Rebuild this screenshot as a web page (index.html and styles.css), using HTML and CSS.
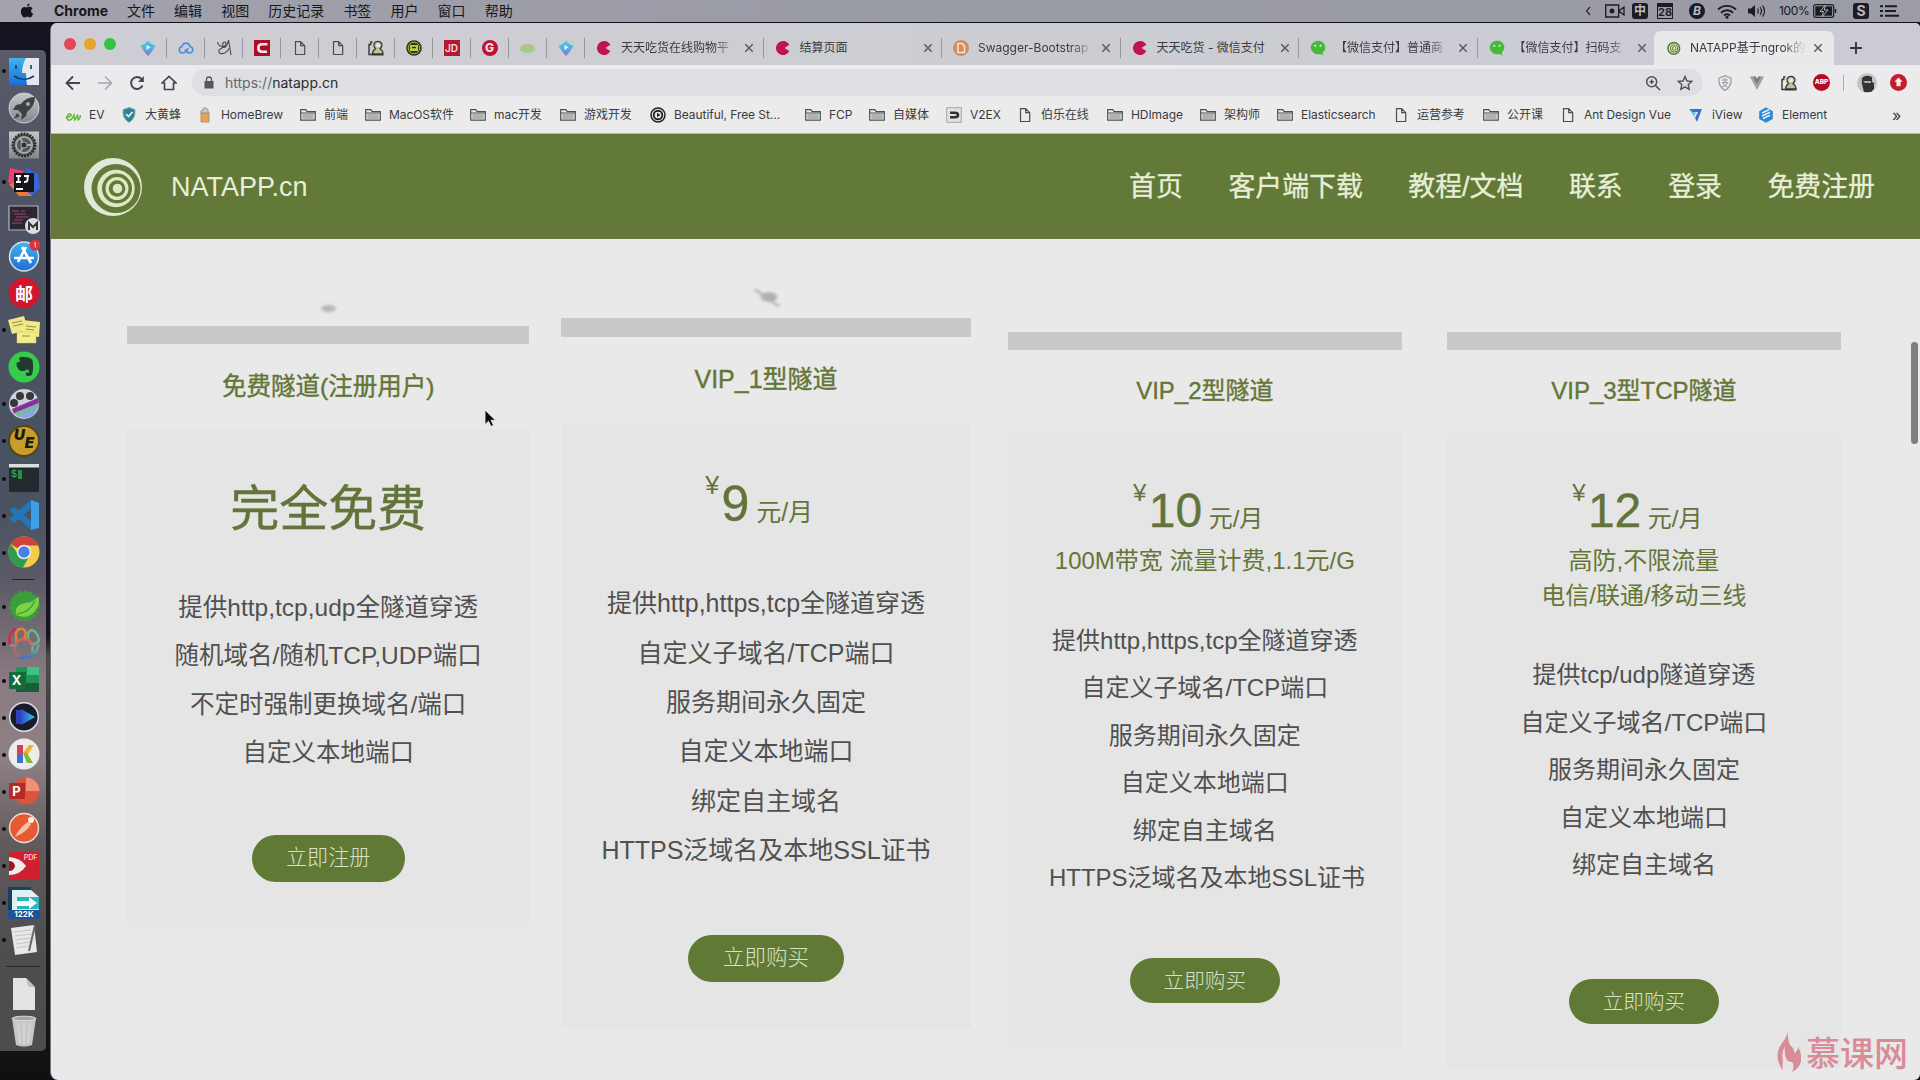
FILE: index.html
```
<!DOCTYPE html>
<html lang="zh-CN">
<head>
<meta charset="utf-8">
<title>NATAPP</title>
<link rel="stylesheet" href="styles.css">
</head>
<body>
<svg class="defs" width="0" height="0">
  <defs>
    <linearGradient id="gem" x1="0" y1="0" x2="0" y2="1"><stop offset="0" stop-color="#55c8e6"/><stop offset=".5" stop-color="#4fb2de"/><stop offset="1" stop-color="#8a6fd0"/></linearGradient>
    <linearGradient id="silver" x1="0" y1="0" x2="0" y2="1"><stop offset="0" stop-color="#c4c6c8"/><stop offset="1" stop-color="#84878a"/></linearGradient>
    <linearGradient id="blue" x1="0" y1="0" x2="0" y2="1"><stop offset="0" stop-color="#3fb4ee"/><stop offset="1" stop-color="#1b6fd8"/></linearGradient>
    <linearGradient id="paw" x1="0" y1="0" x2="0" y2="32" gradientUnits="userSpaceOnUse"><stop offset="0" stop-color="#e08a30"/><stop offset=".45" stop-color="#d8605a"/><stop offset=".7" stop-color="#4fb9a8"/><stop offset="1" stop-color="#4560d8"/></linearGradient>
    <linearGradient id="play" x1="0" y1="0" x2="1" y2="0"><stop offset="0" stop-color="#3048d0"/><stop offset="1" stop-color="#30d0d8"/></linearGradient>
  </defs>
  <symbol id="folder" viewBox="0 0 16 16"><path d="M.7 13.2V2.6h5l1.6 2h8v8.6z" fill="#ececec" stroke="#4c4d50" stroke-width="1.2"/><path d="M2.3 7h11.4v5.2H2.3z" fill="#b0b1b3"/><path d="M1 6h14" stroke="#4c4d50"/></symbol>
  <symbol id="page" viewBox="0 0 16 16"><path d="M3.5 1.7h5.2l4 4v8.8H3.5z M8.7 1.7v4h4" fill="none" stroke="#4c4d50" stroke-width="1.2"/></symbol>
  <symbol id="close" viewBox="0 0 10 10"><path d="M1.3 1.3l7.4 7.4M8.7 1.3L1.3 8.7" stroke="#55565a" stroke-width="1.4"/></symbol>
  <symbol id="pac" viewBox="0 0 16 16"><path d="M8 1a7 7 0 1 0 6.3 10L9.5 8l4.800-3.200A7 7 0 0 0 8 1z" fill="#c01350"/></symbol>
  <symbol id="gemicon" viewBox="0 0 16 16"><path d="M8 .5l2.800 3 4.700 2.600-4 6L8 16l-3.500-3.900-4-6L5.200 3.500z" fill="url(#gem)"/><path d="M6.500 5l4 2.300-4 2.700z" fill="#e8f8ff"/></symbol>
  <symbol id="wechat" viewBox="0 0 16 16"><path d="M8 .8a7.200 6.700 0 0 1 4.500 12l1 2.600-3.300-1.500A7.300 6.700 0 1 1 8 .8z" fill="#47b93a"/><circle cx="5.300" cy="5.800" r="1" fill="#e6f8e2"/><circle cx="10.500" cy="5.800" r="1" fill="#e6f8e2"/></symbol>
  <symbol id="person" viewBox="0 0 16 16"><path d="M4.500 2H2.800v2.500H1v10h3" fill="none" stroke="#34382e" stroke-width="1.400"/><path d="M4.500 14q0-3.500 3-5.300Q5.500 7 6 4q1-2.700 4-2.700t4 3q.3 2.500-2 4.400 3 1.500 3 5.300z" fill="#b9c49a" stroke="#34382e" stroke-width="1.200"/><circle cx="10" cy="5.200" r="2" fill="#e9ecde"/><path d="M4 14.500h11.500" stroke="#34382e" stroke-width="1.800"/></symbol>
  <symbol id="rings" viewBox="0 0 60 60"><circle cx="30" cy="30" r="29" fill="#dfe9da"/><circle cx="33" cy="31.500" r="24.500" fill="#627937"/><circle cx="33" cy="31.500" r="18.700" fill="#dfe9c8"/><circle cx="34" cy="31.500" r="15" fill="#627937"/><circle cx="34" cy="31.500" r="11.500" fill="#dfe9c8"/><circle cx="34" cy="31.500" r="8.300" fill="#627937"/><circle cx="34.500" cy="31.500" r="4.800" fill="#dfe9c8"/></symbol>
</svg>

<div class="menubar">
  <svg class="apple" viewBox="0 0 16 18"><path d="M11 .3c.1 1.700-1.400 3.300-3 3.300C7.800 2 9.300.5 11 .3zM8.200 4.800c.8 0 1.500-.6 2.800-.6 1.400 0 2.700.8 3.400 1.900-2.600 1.500-2.200 5 .6 6-.6 1.700-2.100 4.300-3.800 4.300-1.100 0-1.500-.7-2.900-.7s-1.900.7-2.900.7C3.200 16.400 1 12.700 1 9.500c0-3.300 2-5.200 4.100-5.200 1.300 0 2.200.5 3.100.5z" fill="#15151a"/></svg>
  <b class="appname">Chrome</b>
  <nav class="menus"><span>文件</span><span>编辑</span><span>视图</span><span>历史记录</span><span>书签</span><span>用户</span><span>窗口</span><span>帮助</span></nav>
  <div class="status">
    <svg width="6" height="10" viewBox="0 0 6 10"><path d="M5 1L1.500 5 5 9" fill="none" stroke="#2a2b30" stroke-width="1.200"/></svg>
    <svg width="20" height="14" viewBox="0 0 20 14"><path d="M.7 1h13v12H.7zM13.700 7l5.300-4v8z" fill="none" stroke="#1c1d22" stroke-width="1.300"/><circle cx="7" cy="7" r="2.500" fill="#1c1d22"/></svg>
    <span class="badge-ime">中</span>
    <span class="badge-cal">28</span>
    <span class="badge-b">B</span>
    <svg width="20" height="15" viewBox="0 0 20 15"><g fill="none" stroke="#1c1d22" stroke-width="1.900"><path d="M1 5.500a13 13 0 0 1 18 0M4 8.700a8.600 8.600 0 0 1 12 0M7 11.500a4.200 4.200 0 0 1 6 0"/></g><circle cx="10" cy="13.300" r="1.500" fill="#1c1d22"/></svg>
    <svg width="18" height="14" viewBox="0 0 18 14"><path d="M1 4.500h3L8 1v12L4 9.500H1z" fill="#1c1d22"/><path d="M10.500 4.500q1.500 2.500 0 5M13 3q3 4 0 8M15.500 1.500q4 5.500 0 11" fill="none" stroke="#1c1d22" stroke-width="1.200"/></svg>
    <span class="percent">100%</span>
    <svg width="24" height="14" viewBox="0 0 24 14"><rect x=".7" y=".7" width="20" height="12.600" rx="2" fill="none" stroke="#1c1d22" stroke-width="1.200"/><rect x="2.300" y="2.300" width="16.800" height="9.400" fill="#1c1d22"/><path d="M12.500 1L7 7.500h3.500L9 13l6-7h-3.800z" fill="#1c1d22" stroke="#b0b0b8"/><path d="M22.500 5v4" stroke="#1c1d22" stroke-width="1.500"/></svg>
    <span class="badge-s">S</span>
    <svg width="19" height="12" viewBox="0 0 19 12"><path d="M0 1.200h3M5 1.200h12M0 6h3M5 6h11M0 10.800h3M5 10.800h14" stroke="#1c1d22" stroke-width="1.900"/></svg>
  </div>
</div>

<div class="desktop">
  <aside class="dock-side">
    <div class="dock">
      <div class="app run"><svg viewBox="0 0 32 32"><path d="M1 3h30v27H1z" fill="#e2e8ee"/><path d="M1 3h17q-4 7-4 15h4q0 6 1 12H1z" fill="url(#blue)"/><path d="M8 10v4M23 10v4M6 21q10 7 20 0" fill="none" stroke="#1d3b5c" stroke-width="1.600"/></svg></div>
      <div class="app"><svg viewBox="0 0 32 32"><circle cx="16" cy="16" r="15" fill="url(#silver)" stroke="#ced0d2"/><path d="M27 5q-9 0-14 7l-5 1-3 5 5 0 4 4-1 6 5-4 1-4q8-6 8-15zM9 21l-3 6 6-3z" fill="#3d4144"/><circle cx="20" cy="12" r="2" fill="#aaa"/></svg></div>
      <div class="app"><svg viewBox="0 0 32 32"><path d="M1 2.500h30v27H1z" fill="url(#silver)"/><circle cx="16" cy="16" r="11" fill="#55585a" stroke="#2b2d2f" stroke-width="3" stroke-dasharray="2 1"/><circle cx="16" cy="16" r="8" fill="none" stroke="#a5a8aa" stroke-width="2"/><path d="M16 16h8M16 16l-4-7M16 16l-4 7" stroke="#a5a8aa" stroke-width="2"/><circle cx="16" cy="16" r="3" fill="#2b2d2f" stroke="#a5a8aa"/></svg></div>
      <div class="app run"><svg viewBox="0 0 32 32"><path d="M2 2l14 3-6 16-10-5z" fill="#e8407a"/><path d="M18 2l12 6 2 14-9 8-9-8z" fill="#3566dc"/><path d="M1 18l10 12h13L9 16z" fill="#ea7a3a"/><path d="M6 7h20v19H6z" fill="#15151a"/><path d="M8 10h5M10.500 10v6M8 16h5M16 10h5M19.500 10v4q0 2-3.500 2M8 23h7" fill="none" stroke="#fff" stroke-width="1.800"/></svg></div>
      <div class="app"><svg viewBox="0 0 32 32"><path d="M1 3h29v24H1z" fill="#2c2632" stroke="#b5b6bc" stroke-width="1.200"/><path d="M4 8h7M6 11h12M8 14h13M6 17h9M4 20h10M13 8h4" stroke="#9a4960" stroke-width="1.100"/><circle cx="25" cy="23" r="8" fill="#dcdde0"/><path d="M21 27v-7l4 4 4-4v7" fill="none" stroke="#333" stroke-width="2"/></svg></div>
      <div class="app"><svg viewBox="0 0 32 32"><circle cx="16" cy="16.500" r="14.500" fill="url(#blue)" stroke="#d7dde6" stroke-width="1.500"/><path d="M18 7L10 22M14 7l9 16M6 18h20" stroke="#fff" stroke-width="2.600"/><circle cx="27" cy="5" r="5.500" fill="#d9343c"/><path d="M26 3.500l1.300-1v5" fill="none" stroke="#ffd0d0"/></svg></div>
      <div class="app"><svg viewBox="0 0 32 32"><circle cx="16" cy="16" r="15.500" fill="#cf1730"/></svg><span class="glyph mail">邮</span></div>
      <div class="app run"><svg viewBox="0 0 32 32"><path d="M0 6l16-4 4 14-16 4z" fill="#efe88a"/><path d="M14 6l18 2-1 15-17-2z" fill="#f2ea86"/><path d="M9 18h19v11H9z" fill="#f4ec8a" stroke="#d0c668" stroke-width=".5"/><path d="M4 9l10-2M5 12l10-2M18 12l10 1M18 15l8 1M14 22h8" stroke="#998c40"/></svg></div>
      <div class="app"><svg viewBox="0 0 32 32"><circle cx="16" cy="16" r="15.500" fill="#35cc4c"/><path d="M11 7q3-2 5-1 7 0 8.500 3.500 1.500 8-.5 14-1.500 2-4.500 1.500-3-1.500-1-3.500 2-.5 2 .8 1.200-1 0-3.300-2.500-1-3 .5-4 1.500-7-1-2.500-3-2-7 2 0 3.500-1z" fill="#243a30"/></svg></div>
      <div class="app run"><svg viewBox="0 0 32 32"><circle cx="16" cy="16" r="15" fill="#cfd2d8"/><g fill="#36393e"><circle cx="12" cy="8" r="4"/><circle cx="22" cy="8" r="4"/><circle cx="6" cy="15" r="4"/></g><path d="M4 21l26-11 1 5L6 26z" fill="#8b2ca0"/><path d="M6 25l25-10 0 4L10 29z" fill="#79b7a0"/><path d="M10 28l20-9-4 8q-8 6-16 1z" fill="#8aa8de"/></svg></div>
      <div class="app run"><svg viewBox="0 0 32 32"><circle cx="16" cy="16" r="15" fill="#c79d2c" stroke="#55431c" stroke-width="2"/></svg><span class="glyph ue"><i>U</i><i class="low">E</i></span></div>
      <div class="app run"><svg viewBox="0 0 32 32"><path d="M1 2h30v28H1z" fill="#232b30"/><path d="M1 2h30v3.500H1z" fill="#dadfe0"/><path d="M10 8h4v9h-4z" fill="#2b8d43"/></svg><span class="glyph term">$</span></div>
      <div class="app run"><svg viewBox="0 0 32 32"><path d="M23 1l8 3v25l-8 2z" fill="#3ba0e6"/><path d="M23 1v9L6 24l-5-4zM1 11l5-3 17 14v9z" fill="#2376b8"/></svg></div>
      <div class="app run"><svg viewBox="0 0 32 32"><circle cx="16" cy="16" r="15.500" fill="#f3cc48"/><path d="M16 16L2.600 8A15.500 15.500 0 0 1 30 9.500H16z" fill="#d2403a"/><path d="M2.600 8A15.500 15.500 0 0 0 15 31.500L22 19l-6-3-6 2z" fill="#319a52"/><circle cx="16" cy="16" r="7.300" fill="#e8edf4"/><circle cx="16" cy="16" r="5.700" fill="#4680e2"/></svg></div>
      <hr class="rule short">
      <div class="app run"><svg viewBox="0 0 32 32"><circle cx="16.500" cy="16" r="14" fill="#3c9e3a" stroke="#3c9e3a" stroke-width="3" stroke-dasharray="3 2"/><path d="M30 6q-4 7-13 7-11 2-9 12 12 5 19-4 6-8 3-15z" fill="#7cd348"/><path d="M9 24q12-1 18-13" fill="none" stroke="#3c9e3a" stroke-width="1.300"/></svg></div>
      <div class="app run"><svg viewBox="0 0 32 32"><g fill="none" stroke-width="2.500"><path d="M2 18Q-1 6 8 2" stroke="#c92e4e"/><path d="M8 15V6q2-5 7-4 4 2 2 8l-2 3" stroke="#e58232"/><path d="M20 12q-1-8 4-9 6 2 7 11-4 5-9 2" stroke="#62b98c"/><path d="M2 18l5 1q1-6 8-7 8 0 10 7l-1 7 4-1 3-8M10 30q7 1 14-1l-1-2" stroke="url(#paw)"/><path d="M7 19q-3 6 4 11" stroke="#b06a6a"/></g></svg></div>
      <div class="app run"><svg viewBox="0 0 32 32"><path d="M8 3h23v25H8z" fill="#219455"/><path d="M19 3h12v8H19z" fill="#39c37c"/><path d="M19 19h12v9H8v-7z" fill="#175f38"/><path d="M1 8h17v17H1z" fill="#126c3b"/></svg><span class="glyph office">X</span></div>
      <div class="app run"><svg viewBox="0 0 32 32"><circle cx="16" cy="16" r="14.300" fill="#171b2a" stroke="#d9dce3" stroke-width="1.500"/><path d="M8 9h6v14H8z" fill="#3040b8"/><path d="M13 8l14 8-14 8z" fill="url(#play)"/></svg></div>
      <div class="app run"><svg viewBox="0 0 32 32"><circle cx="16" cy="16" r="15.500" fill="#ececea"/><path d="M9 7h6v9l-6 9z" fill="#d83b58"/><path d="M15 15l6-8h5l-6 9z" fill="#efb32d"/><path d="M15 15l4 0 6 10h-6z" fill="#7bb93b"/><path d="M9 17l6-1v9H9z" fill="#3b72cf"/></svg></div>
      <div class="app run"><svg viewBox="0 0 32 32"><circle cx="18" cy="16" r="13.500" fill="#dc5340"/><path d="M18 2.500A13.500 13.500 0 0 1 31.500 16H18z" fill="#f09078"/><path d="M1 8h16v16H1z" fill="#b42a26"/></svg><span class="glyph office">P</span></div>
      <div class="app run"><svg viewBox="0 0 32 32"><circle cx="16" cy="16" r="14.500" fill="#e65a35" stroke="#f0ddd0" stroke-width="1.400"/><path d="M7 25q5-10 13-15l3 2q-4 8-16 13z" fill="#f3c3a8"/><circle cx="23" cy="8" r="3" fill="#fff0e4"/></svg></div>
      <div class="app run"><svg viewBox="0 0 32 32"><path d="M1 2h30v28H1z" fill="#cf1f30"/><path d="M1 7q12 1 17 9-6 9-17 9z" fill="#eee"/><path d="M1 11q5 0 6 5-1 5-6 5z" fill="#a41424"/></svg><span class="glyph pdf">PDF</span></div>
      <div class="app run"><svg viewBox="0 0 32 32"><path d="M0 0h23v32H0z" fill="#17415c"/><path d="M4 3h19l8 7v14H4z" fill="#dff2f2"/><path d="M9 10h22v12H9z" fill="#28b8bc"/><path d="M9 14h12v-4l8 6-8 6v-3H9z" fill="#f2fbfb"/><path d="M0 23h32v9H0z" fill="#1c5496"/></svg><span class="glyph net">122K</span></div>
      <div class="app run"><svg viewBox="0 0 32 32"><path d="M3 4l23-3 3 27-22 3z" fill="#e8e8e8"/><path d="M6 8l17-2M7 12l17-2M7 16l16-2M8 20l14-2M8 24l12-2" stroke="#c4c4c4"/><path d="M27 1l-6 26" stroke="#66686c" stroke-width="2"/></svg></div>
      <hr class="rule">
      <div class="app"><svg viewBox="0 0 32 32"><path d="M5 0h13l9 9v23H5z" fill="#e3e3e1"/><path d="M18 0l2 8 7 2z" fill="#bfc0bf"/></svg></div>
      <div class="app"><svg viewBox="0 0 32 32"><path d="M4 3h24l-4 27q-8 3-16 0z" fill="#c6c7c7"/><ellipse cx="16" cy="3.500" rx="12" ry="2.300" fill="#a4a6a7" stroke="#ddd"/><path d="M10 8l2 20M16 8v21M22 8l-2 20" stroke="#d3d4d4" stroke-width="2"/></svg></div>
    </div>
  </aside>

  <main class="window">
    <div class="tabstrip">
      <div class="lights"><i class="red"></i><i class="yellow"></i><i class="green"></i></div>
      <div class="pins">
        <span><svg><use href="#gemicon"/></svg></span>
        <span><svg viewBox="0 0 16 16"><path d="M4 13a3.300 3.300 0 0 1 0-6.500C5 2 11 2 12 6.500a3.300 3.300 0 0 1 0 6.500Q9 13 7 9.500M4 13q4 0 6-5" fill="none" stroke="#4a8fdc" stroke-width="1.600"/></svg></span>
        <span><svg viewBox="0 0 16 16"><path d="M1.500 2q1 5 6 4.500M13 8.500q-3 6-9 5-3-3 1-5 5-2 5-5.500-1-2-3 0-1 3 1 4.500 3 0 4.500-7.500l2.500 15" fill="none" stroke="#44464a" stroke-width="1.100"/></svg></span>
        <span><svg viewBox="0 0 16 16"><path d="M0 0h16v16H0z" fill="#a80e24"/><path d="M13.500 4.300H8Q4.300 4.300 4.300 8T8 11.700h5" fill="none" stroke="#f4e6e6" stroke-width="2.600"/></svg></span>
        <span><svg><use href="#page"/></svg></span>
        <span><svg><use href="#page"/></svg></span>
        <span><svg><use href="#person"/></svg></span>
        <span><svg viewBox="0 0 16 16"><circle cx="8" cy="8" r="7.800" fill="#33361c"/><circle cx="8" cy="8" r="5.800" fill="none" stroke="#aebb3a"/><path d="M4 5h8v6H4z" fill="#c0cc48"/><path d="M6 7.500h4" stroke="#33361c" stroke-width="1.500"/></svg></span>
        <span class="jd"><b>JD</b></span>
        <span class="gg"><b>G</b></span>
        <span><i class="leaf"></i></span>
        <span><svg><use href="#gemicon"/></svg></span>
      </div>
      <div class="tab"><svg class="fav"><use href="#pac"/></svg><span class="label fade">天天吃货在线购物平</span><svg class="x"><use href="#close"/></svg></div>
      <div class="tab"><svg class="fav"><use href="#pac"/></svg><span class="label">结算页面</span><svg class="x"><use href="#close"/></svg></div>
      <div class="tab"><svg class="fav" viewBox="0 0 16 16"><circle cx="8" cy="8" r="8" fill="#d48d58"/><path d="M5 3.500h4l2.500 2.500v6.500H5z" fill="#d48d58" stroke="#f3e6da" stroke-width="1.500"/></svg><span class="label fade">Swagger-Bootstrap</span><svg class="x"><use href="#close"/></svg></div>
      <div class="tab"><svg class="fav"><use href="#pac"/></svg><span class="label">天天吃货 - 微信支付</span><svg class="x"><use href="#close"/></svg></div>
      <div class="tab"><svg class="fav"><use href="#wechat"/></svg><span class="label fade">【微信支付】普通商</span><svg class="x"><use href="#close"/></svg></div>
      <div class="tab last"><svg class="fav"><use href="#wechat"/></svg><span class="label fade">【微信支付】扫码支</span><svg class="x"><use href="#close"/></svg></div>
      <div class="tab active"><svg class="fav"><use href="#rings"/></svg><span class="label fade">NATAPP基于ngrok的</span><svg class="x"><use href="#close"/></svg></div>
      <svg class="plus" viewBox="0 0 12 12"><path d="M6 0v12M0 6h12" stroke="#36373b" stroke-width="1.900"/></svg>
    </div>

    <div class="toolbar">
      <div class="navs">
        <svg viewBox="0 0 16 16"><path d="M15 8H2M8 1.500L1.500 8 8 14.500" fill="none" stroke="#46474b" stroke-width="1.800"/></svg>
        <svg viewBox="0 0 16 16"><path d="M1 8h13M8 1.500L14.500 8 8 14.500" fill="none" stroke="#a5a6aa" stroke-width="1.600"/></svg>
        <svg viewBox="0 0 16 16"><path d="M13.500 10.500A6 6 0 1 1 12.500 4" fill="none" stroke="#46474b" stroke-width="1.900"/><path d="M14.800 1v6H9z" fill="#46474b"/></svg>
        <svg viewBox="0 0 16 16"><path d="M1 8l7-6.500L15 8h-2.500v6.500h-9V8z" fill="none" stroke="#46474b" stroke-width="1.700"/></svg>
      </div>
      <div class="omnibox">
        <svg class="lock" viewBox="0 0 10 13"><path d="M.5 5h9v7.500h-9z" fill="#55565b"/><path d="M2.500 5V3.500a2.500 2.500 0 0 1 5 0V5" fill="none" stroke="#55565b" stroke-width="1.300"/></svg>
        <span class="url"><span class="scheme">https://</span>natapp.cn</span>
        <svg viewBox="0 0 16 16"><circle cx="6.700" cy="6.700" r="5" fill="none" stroke="#505156" stroke-width="1.500"/><path d="M10.500 10.500L15 15M4.500 6.700h4.400M6.700 4.500v4.400" stroke="#505156" stroke-width="1.500"/></svg>
        <svg viewBox="0 0 16 16"><path d="M8 1.500l2 4.500 4.800.4-3.600 3.200 1 4.800L8 11.900l-4.200 2.500 1-4.800L1.200 6.400 6 6z" fill="none" stroke="#505156" stroke-width="1.400"/></svg>
      </div>
      <div class="exts">
        <svg viewBox="0 0 16 16"><path d="M8 .7l6 2.500q1 8-6 12.300Q1 11.200 2 3.200z" fill="none" stroke="#999a9e" stroke-width="1.200"/><path d="M5 5h6M8 3v4M5 7.500h6q-2 3.500-6 4.500M5.500 8q2 3 5 4" fill="none" stroke="#999a9e"/></svg>
        <svg viewBox="0 0 16 16"><path d="M.8 1.500H5L8 7l3-5.500h4.200L8 15z" fill="#a0a2a3"/><path d="M4 1.500h2.800L8 4l1.200-2.500H12L8 9z" fill="#77797b"/></svg>
        <svg><use href="#person"/></svg>
        <span class="abp">ABP</span>
        <i class="bar"></i>
        <svg class="avatar" viewBox="0 0 20 20"><circle cx="10" cy="10" r="10" fill="#c3c4c2"/><path d="M5 5q4-4 10-1l0 5 2 1v6l-3 3H7l-1-4q-2-5-1-10z" fill="#333436"/><path d="M6 8h8v2H8z" fill="#aeb0ae"/></svg>
        <svg class="update" viewBox="0 0 18 18"><circle cx="9" cy="9" r="9" fill="#c51c2b"/><path d="M9 3.800l4.500 4.500h-2.300V13H6.800V8.300H4.500z" fill="#f6eaea"/></svg>
      </div>
    </div>

    <div class="bookmarks">
      <span><svg viewBox="0 0 16 16"><path d="M.8 10.500q6-.5 5.200-3.200-2.500-1.300-4 2.200-.3 4.300 3 3.500 2.500-1 4-5l.8 5q2-2 2.700-5.300l.8 5.300q2-2 2.200-5" fill="none" stroke="#62b234" stroke-width="1.400"/></svg>EV</span>
      <span><svg viewBox="0 0 16 16"><path d="M8 .5L14 2.500q1 9-6 13Q1 11.500 2 2.500z" fill="#2d8496" stroke="#8fb1b6"/><path d="M5 7l2.500 2.500L11.500 5" fill="none" stroke="#e8f8f8" stroke-width="1.600"/></svg>大黄蜂</span>
      <span><svg viewBox="0 0 16 16"><path d="M4 5.500h8v9.500H4z" fill="#e3a552" stroke="#a9947e"/><path d="M4 6q-1-3 2-3 0-3 2-2 4 0 3 5z" fill="#c9c9c5" stroke="#85837f" stroke-width=".7"/></svg>HomeBrew</span>
      <span><svg><use href="#folder"/></svg>前端</span>
      <span><svg><use href="#folder"/></svg>MacOS软件</span>
      <span><svg><use href="#folder"/></svg>mac开发</span>
      <span><svg><use href="#folder"/></svg>游戏开发</span>
      <span><svg viewBox="0 0 16 16"><circle cx="8" cy="8" r="7" fill="none" stroke="#222326" stroke-width="1.500"/><circle cx="8" cy="8" r="4.300" fill="none" stroke="#222326" stroke-width="1.900"/><path d="M7 5.800L10.500 8 7 10.200z" fill="#222326"/></svg>Beautiful, Free St...</span>
      <span><svg><use href="#folder"/></svg>FCP</span>
      <span><svg><use href="#folder"/></svg>自媒体</span>
      <span><svg viewBox="0 0 16 16"><path d="M.7.700h14.600v14.600H.7z" fill="#e2e2e3" stroke="#a5a6a8"/><path d="M4 5.700h5q3 0 3 2.300t-3 2.300H4" fill="none" stroke="#303236" stroke-width="2.600"/></svg>V2EX</span>
      <span><svg><use href="#page"/></svg>伯乐在线</span>
      <span><svg><use href="#folder"/></svg>HDImage</span>
      <span><svg><use href="#folder"/></svg>架构师</span>
      <span><svg><use href="#folder"/></svg>Elasticsearch</span>
      <span><svg><use href="#page"/></svg>运营参考</span>
      <span><svg><use href="#folder"/></svg>公开课</span>
      <span><svg><use href="#page"/></svg>Ant Design Vue</span>
      <span><svg viewBox="0 0 16 16"><path d="M1 2h13L9 15 7 11l3-6H4z" fill="#3d6fd8"/><path d="M1 2l3 3h4l-2 5z" fill="#6fc8e0"/></svg>iView</span>
      <span><svg viewBox="0 0 16 16"><path d="M8 .3l6.800 3.900v7.700L8 15.700l-6.800-3.800V4.200z" fill="#2f88d4"/><path d="M4 6l7-3.200M4 9l8-3.800M5 11.500l7-3.300" stroke="#e1f0fb" stroke-width="1.500"/></svg>Element</span>
      <span class="more">»</span>
    </div>

    <header class="site">
      <svg class="logo"><use href="#rings"/></svg>
      <span class="brand">NATAPP.cn</span>
      <nav><a>首页</a><a>客户端下载</a><a>教程/文档</a><a>联系</a><a>登录</a><a>免费注册</a></nav>
    </header>

    <section class="plans">
      <article class="card c1">
        <i class="speck"></i>
        <div class="strip"></div>
        <h3>免费隧道(注册用户)</h3>
        <div class="body">
          <p class="price free">完全免费</p>
          <ul><li>提供http,tcp,udp全隧道穿透</li><li>随机域名/随机TCP,UDP端口</li><li>不定时强制更换域名/端口</li><li>自定义本地端口</li></ul>
          <a class="btn">立即注册</a>
        </div>
      </article>
      <article class="card c2">
        <i class="speck"></i>
        <div class="strip"></div>
        <h3>VIP_1型隧道</h3>
        <div class="body">
          <p class="price"><span class="yen">¥</span><span class="num">9</span><span class="unit">元/月</span></p>
          <ul><li>提供http,https,tcp全隧道穿透</li><li>自定义子域名/TCP端口</li><li>服务期间永久固定</li><li>自定义本地端口</li><li>绑定自主域名</li><li>HTTPS泛域名及本地SSL证书</li></ul>
          <a class="btn">立即购买</a>
        </div>
      </article>
      <article class="card c3">
        <div class="strip"></div>
        <h3>VIP_2型隧道</h3>
        <div class="body">
          <p class="price"><span class="yen">¥</span><span class="num">10</span><span class="unit">元/月</span></p>
          <p class="sub">100M带宽 流量计费,1.1元/G</p>
          <ul><li>提供http,https,tcp全隧道穿透</li><li>自定义子域名/TCP端口</li><li>服务期间永久固定</li><li>自定义本地端口</li><li>绑定自主域名</li><li class="wide">HTTPS泛域名及本地SSL证书</li></ul>
          <a class="btn">立即购买</a>
        </div>
      </article>
      <article class="card c4">
        <div class="strip"></div>
        <h3>VIP_3型TCP隧道</h3>
        <div class="body">
          <p class="price"><span class="yen">¥</span><span class="num">12</span><span class="unit">元/月</span></p>
          <p class="sub">高防,不限流量</p>
          <p class="sub">电信/联通/移动三线</p>
          <ul><li>提供tcp/udp隧道穿透</li><li>自定义子域名/TCP端口</li><li>服务期间永久固定</li><li>自定义本地端口</li><li>绑定自主域名</li></ul>
          <a class="btn">立即购买</a>
        </div>
      </article>
    </section>
  </main>
</div>

<i class="scrollthumb"></i>
<svg class="cursor" viewBox="0 0 13 19"><path d="M1 1v14.500l3.500-3.300 2.500 5.300 2.500-1.200-2.400-5h4.500z" fill="#0c0c0c" stroke="#e8e8e8" stroke-width=".9"/></svg>
<div class="watermark">
  <svg viewBox="0 0 24 42"><path d="M11 0q-1 6-6 12-6 8-4 17 2 7 5 11-1-6 0-10-2-8 2-15-1 8 1 12 1 4 6 4 3 3 0 10 8-4 9-11 1-8-3-14 0 4-4 6 1-4-4-8-3-7-2-14z" fill="#d98b98"/></svg>
  <span>慕课网</span>
</div>
</body>
</html>
```
FILE: styles.css
```
* { box-sizing: border-box; }
body {
  margin: 0;
  width: 1920px;
  height: 1080px;
  overflow: hidden;
  background: #101018;
  font-family: Inter, "Noto Sans CJK SC", sans-serif;
  position: relative;
}
.defs { position: absolute; }
i { font-style: normal; }
svg { flex: none; display: block; }

/* system menu bar */
.menubar {
  display: flex;
  align-items: center;
  height: 22px;
  padding-left: 20px;
  background: linear-gradient(90deg, #a3a2ad, #989aa4 50%, #9b9ca5);
  color: #15161a;
  font-size: 14px;
  line-height: 22px;
}
.apple { width: 14px; height: 16px; }
.appname { width: 73px; margin-left: 20px; font-size: 14px; }
.menus { display: flex; gap: 19.100px; flex: 1; }
.status {
  display: grid;
  grid-template-columns: 20px 27px 25px 32px 28px 30px 32px 34px 40px 27px 22px;
  width: 335px;
  align-items: center;
}
.badge-ime, .badge-s, .badge-cal, .badge-b {
  width: 16px; height: 16px; line-height: 16px;
  background: #1c1d22; color: #b8b9c1; border-radius: 3px;
  text-align: center; font-weight: 700; font-size: 12px;
}
.badge-cal { border-radius: 0; background: none; border: 1px solid #1c1d22; border-top-width: 4px; line-height: 11px; color: #1c1d22; font-size: 11px; }
.badge-b { border-radius: 50%; font-style: italic; }
.badge-s { font-size: 14px; }
.percent { font-size: 12px; letter-spacing: -.3px; }

.desktop { display: flex; height: 1058px; padding-top: 1px; }

/* dock */
.dock-side {
  width: 50px;
  padding: 27px 4px 0 0;
  background: linear-gradient(#141420 0 58%, #4e4b4f 60%, #252527 75%, #101012);
}
.dock {
  display: flex;
  flex-direction: column;
  height: 1001px;
  padding-top: 2px;
  border-radius: 0 5px 5px 0;
  background: linear-gradient(#5a5a68, #505464 12%, #485261 45%, #5b5a66 53%, #8b7b83 63%, #8d8084 71%, #625b5d 79%, #4e4d4f 90%, #4c4d4e);
}
.app { height: 37.050px; padding-left: 8px; display: grid; align-items: center; position: relative; }
.app svg { width: 32px; height: 32px; grid-area: 1 / 1; }
.run::before { content: ""; position: absolute; left: 2px; top: 17px; width: 4px; height: 4px; border-radius: 50%; background: #0c0d12; }
.glyph { grid-area: 1 / 1; width: 32px; text-align: center; color: #fff; z-index: 1; }
.mail { font-size: 18px; font-weight: 700; }
.ue { display: flex; justify-content: center; font-size: 15px; font-weight: 900; color: #1d1a12; line-height: 16px; }
.ue i { font-style: italic; margin-top: -4px; }
.ue .low { margin-top: 4px; }
.term { width: 12px; font: 10px "Liberation Mono", monospace; color: #38c457; margin-top: -8px; }
.office { width: 17px; font-size: 13px; font-weight: 700; }
.pdf { font-size: 7px; padding-left: 13px; margin-top: -17px; }
.net { font-size: 8px; font-weight: 700; margin-top: 24px; line-height: 9px; }
.rule { width: 34px; height: 1px; margin: 8px 0 8px 6px; border: 0; background: #25262a; flex: none; }
.rule.short { width: 22px; margin: 8px 0 8px 12px; }

/* browser window */
.window {
  width: 1870px;
  border-left: 1px solid #77777d;
  border-radius: 7px 5px 6px 8px;
  background: #e9e9e9;
  overflow: hidden;
}
.tabstrip { display: flex; height: 42px; background: linear-gradient(90deg, #cecdd4, #cbccd3); }
.lights { display: flex; gap: 8px; padding: 15px 0 0 13px; width: 78px; }
.lights i { width: 12px; height: 12px; border-radius: 50%; }
.red { background: #e64555; }
.yellow { background: #e6a52c; }
.green { background: #2fc540; }
.pins { display: grid; grid-template-columns: repeat(12, 38px); padding-top: 15px; height: 35px; }
.pins span { display: grid; place-items: center; height: 20px; border-right: 1px solid #96979d; }
.pins svg { width: 16px; height: 16px; }
.pins b { width: 16px; height: 16px; line-height: 16px; text-align: center; color: #f3dede; }
.jd b { background: #b11a36; font-size: 10px; font-weight: 600; }
.gg b { background: #bd1237; border-radius: 50%; font-size: 12px; font-weight: 800; }
.leaf { width: 15px; height: 9px; border-radius: 50%; background: #a8c98a; filter: blur(.6px); }
.tab {
  display: flex;
  align-items: center;
  width: 178.500px;
  height: 20px;
  margin-top: 15px;
  padding-left: 11px;
  border-right: 1px solid #96979d;
  font-size: 12px;
  color: #3b3c40;
}
.fav { width: 16px; height: 16px; }
.label { width: 116px; margin-left: 9px; white-space: nowrap; line-height: 20px; }
.fade { mask-image: linear-gradient(90deg, #000 80%, rgba(0, 0, 0, .15) 97%); }
.x { width: 10px; height: 10px; margin-left: 7px; }
.tab.last { border: 0; }
.active { background: #e9e9eb; height: 34px; margin-top: 8px; border: 0; border-radius: 7px 7px 0 0; width: 180px; margin-left: -2px; }
.plus { width: 12px; height: 12px; margin: 19px 0 0 16px; }

.toolbar { display: flex; align-items: center; height: 35px; background: #ebebed; }
.navs { display: flex; gap: 16px; padding-left: 14px; width: 141px; }
.navs svg, .exts svg, .omnibox svg { width: 16px; height: 16px; }
.omnibox { display: flex; align-items: center; gap: 16px; width: 1511px; height: 27px; padding: 0 10px 0 12px; border-radius: 14px; background: #dedfe3; }
.omnibox .lock { width: 10px; height: 13px; }
.url { flex: 1; margin-left: -5px; font-size: 14px; line-height: 20px; color: #2a2b2e; }
.scheme { color: #66676b; }
.exts { display: flex; align-items: center; gap: 16px; padding-left: 14px; }
.abp { width: 17px; height: 17px; border-radius: 50%; background: #b00d24; color: #fff; font-size: 6.500px; font-weight: 800; line-height: 17px; text-align: center; }
.bar { width: 1px; height: 16px; background: #aaabaf; margin: 0 -3px; }
.exts .avatar { width: 20px; height: 20px; }
.exts .update { width: 17px; height: 17px; margin-left: -3px; }

.bookmarks {
  display: grid;
  grid-template-columns: 56px 76px 103px 65px 105px 90px 90px 155px 64px 77px 71px 90px 93px 77px 116px 90px 77px 128px 70px 132px 20px;
  height: 34px;
  padding: 0 0 4px 14px;
  align-items: center;
  background: #ebebec;
  border-bottom: 1px solid #b5b9ab;
  font-size: 12px;
  color: #3a3b3e;
}
.bookmarks span { display: flex; align-items: center; gap: 8px; white-space: nowrap; line-height: 18px; letter-spacing: -.06px; }
.bookmarks svg { width: 16px; height: 16px; }
.bookmarks .more { font-size: 16px; padding-left: 2px; }

/* site */
.site {
  display: flex;
  align-items: center;
  height: 105px;
  padding: 1px 45px 0 32px;
  background: linear-gradient(#627938 86%, #67773b 90%);
  font-family: "Liberation Sans", "Noto Sans CJK SC", sans-serif;
  color: #e8efd8;
}
.logo { width: 60px; height: 60px; }
.brand { flex: 1; margin-left: 28px; font-size: 27px; }
.site nav { display: flex; gap: 45.500px; font-size: 26.900px; line-height: 40px; }
.site nav a { -webkit-text-stroke: .3px; }

.plans {
  display: flex;
  align-items: flex-start;
  padding-left: 76px;
  font-family: "Liberation Sans", "Noto Sans CJK SC", sans-serif;
}
.card { position: relative; flex: none; width: 16.420em; font-size: 24px; text-align: center; color: #505050; }
.c1 { font-size: 24.500px; margin-top: 86.500px; }
.c2 { font-size: 25px; margin: 79px 0 0 31.500px; }
.c3 { margin: 93px 0 0 36.500px; }
.c4 { margin: 93px 0 0 45px; }
.strip { height: .76em; background: #c9c9c9; }
.card h3 { margin: .96em 0 0; height: 2.490em; font-size: 1em; font-weight: 400; line-height: 1.500em; color: #647636; }
.c1 h3 { margin-top: 1.010em; height: 2.440em; }
.card h3, .price.free { -webkit-text-stroke: .4px; }
.body { padding: 1.960em 0 1.850em; background: #e5e5e5; }
.price { display: flex; justify-content: center; align-items: baseline; margin: 0 0 .080em; padding-right: .550em; height: 2.600em; line-height: 2.600em; color: #62743a; }
.price.free { display: block; font-size: 2em; height: 1.340em; line-height: 1.340em; margin-bottom: .050em; padding: 0; }
.num { font-size: 2em; line-height: 1.300em; -webkit-text-stroke: .4px; }
.yen { position: relative; top: -1.080em; margin-right: .1em; }
.unit { margin-left: .27em; }
.sub { margin: 0; height: 1.430em; line-height: 1.430em; color: #647636; }
.card ul { list-style: none; margin: 0; padding: 1.600em 0 0; }
.card li { height: 1.975em; line-height: 1.975em; }
.card .wide { padding-left: .18em; }
.btn { display: block; width: 6.240em; height: 1.880em; margin: 2.370em auto 0; border-radius: 1em; background: #607935; color: #d9e2c8; font-weight: 300; line-height: 1.880em; }
.btn::first-line { font-size: .860em; }
.c4 .btn { margin-top: 3.770em; }
.speck { position: absolute; left: 194px; top: -21px; width: 15px; height: 7px; border-radius: 50%; background: #b5b5b5; filter: blur(1.500px); }
.c2 .speck { left: 193px; top: -29px; width: 26px; height: 18px; border-radius: 0; background: radial-gradient(ellipse 10px 6px at 15px 8px, #b0b0b0 60%, transparent), linear-gradient(35deg, transparent 42%, #c4c4c4 46% 54%, transparent 58%); filter: blur(.8px); }

.scrollthumb { position: absolute; right: 2px; top: 342px; width: 7px; height: 102px; border-radius: 4px; background: #7e7e80; }
.cursor { position: absolute; left: 484px; top: 409px; width: 13px; height: 19px; }
.watermark { position: absolute; left: 1777px; top: 1031px; display: flex; gap: 5px; align-items: center; color: #d98b98; font: 500 34px/42px "Noto Sans CJK SC", sans-serif; white-space: nowrap; }
.watermark svg { width: 24px; height: 42px; }
```
